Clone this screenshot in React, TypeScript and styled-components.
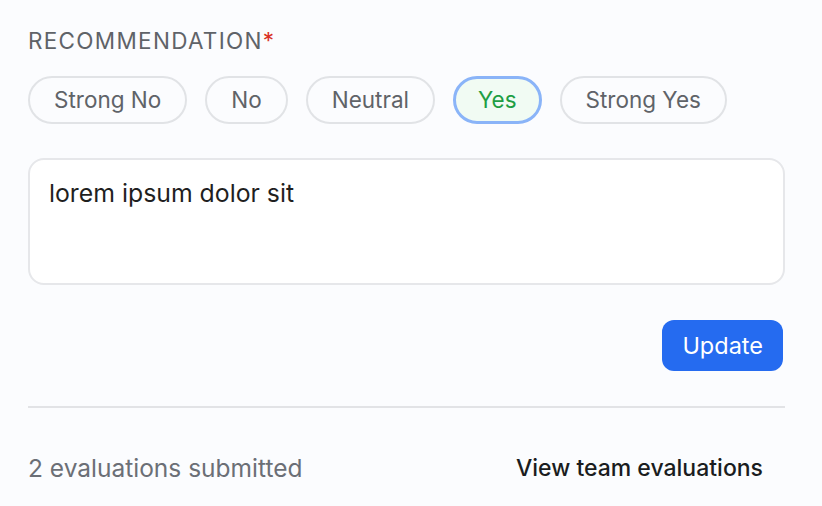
import { useState } from "react";
import styled, { createGlobalStyle } from "styled-components";

const OPTIONS = ["Strong No", "No", "Neutral", "Yes", "Strong Yes"];

const GlobalStyle = createGlobalStyle`
  body {
    margin: 0;
    background: #fbfcfe;
    font-family: Inter, "Noto Sans", sans-serif;
  }
`;

export default function App() {
  const [choice, setChoice] = useState("Yes");
  const [notes, setNotes] = useState("lorem ipsum dolor sit");

  return (
    <>
      <GlobalStyle />
      <Panel>
        <Label>
          RECOMMENDATION<Required>*</Required>
        </Label>
        <PillRow>
          {OPTIONS.map((opt) => (
            <Pill key={opt} $active={choice === opt} onClick={() => setChoice(opt)}>
              {opt}
            </Pill>
          ))}
        </PillRow>
        <Notes value={notes} onChange={(e) => setNotes(e.target.value)} />
        <Actions>
          <UpdateButton>Update</UpdateButton>
        </Actions>
        <Divider />
        <Footer>
          <Count>2 evaluations submitted</Count>
          <TeamLink>View team evaluations</TeamLink>
        </Footer>
      </Panel>
    </>
  );
}

const Panel = styled.div`
  display: flex;
  flex-direction: column;
  padding: 26px 37px 0 28px;
`;

const Label = styled.div`
  font-size: 22.5px;
  letter-spacing: 1.3px;
  color: #5f6368;
  line-height: 30px;
`;

const Required = styled.span`
  color: #d93025;
`;

const PillRow = styled.div`
  display: flex;
  gap: 18px;
  margin-top: 20px;
`;

const Pill = styled.button<{ $active: boolean }>`
  height: 48px;
  padding: 0 ${(p) => (p.$active ? "22px" : "24px")};
  border-radius: 24px;
  font-family: inherit;
  font-size: 22.5px;
  line-height: 1;
  cursor: pointer;
  border: ${(p) => (p.$active ? "3px solid #8ab4f8" : "2px solid #e1e3e6")};
  background: ${(p) => (p.$active ? "#f1fbf3" : "#fbfcfe")};
  color: ${(p) => (p.$active ? "#1e9e43" : "#5f6368")};
`;

const Notes = styled.textarea`
  margin-top: 34px;
  height: 127px;
  box-sizing: border-box;
  padding: 17px 19px;
  border: 2px solid #e6e7ea;
  border-radius: 16px;
  background: #ffffff;
  font-family: inherit;
  font-size: 24.8px;
  line-height: 32px;
  color: #1f1f1f;
  resize: none;
  outline: none;
`;

const Actions = styled.div`
  display: flex;
  justify-content: flex-end;
  margin-top: 35px;
`;

const UpdateButton = styled.button`
  height: 51px;
  padding: 0 20px;
  margin-right: 2px;
  border: none;
  border-radius: 12px;
  background: #256bf0;
  color: #ffffff;
  font-family: inherit;
  font-size: 23.5px;
  cursor: pointer;
`;

const Divider = styled.hr`
  margin: 35px 0 0;
  border: none;
  border-top: 2px solid #e2e3e6;
`;

const Footer = styled.div`
  display: flex;
  justify-content: space-between;
  align-items: center;
  margin-top: 44px;
  padding-right: 22px;
  line-height: 32px;
`;

const Count = styled.span`
  font-size: 24.5px;
  color: #6b6f76;
`;

const TeamLink = styled.span`
  font-size: 23px;
  font-weight: 500;
  color: #1a1c20;
`;
